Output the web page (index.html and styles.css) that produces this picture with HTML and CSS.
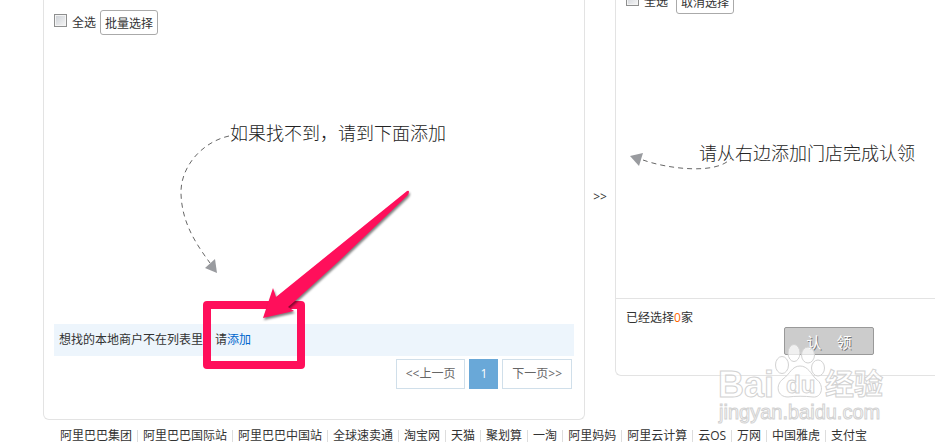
FILE: index.html
```html
<!DOCTYPE html>
<html lang="zh-CN">
<head>
    <meta charset="UTF-8">
    <meta name="viewport" content="width=device-width, initial-scale=1.0">
    <title>门店认领</title>
    <link rel="stylesheet" href="styles.css">
</head>
<body>
    <main class="claim">
        <section class="panel panel-source">
            <div class="toolbar">
                <input type="checkbox" id="selectAll">
                <label for="selectAll">全选</label>
                <button class="btn" type="button">批量选择</button>
            </div>
            <div class="shop-list">
                <p class="hint">如果找不到，请到下面添加</p>
                <svg class="hint-arrow" width="60" height="145" viewBox="0 0 60 145">
                    <path d="M50 6C23 12 1 37 2 64C3 94 18 115 31 133" fill="none" stroke="#666" stroke-dasharray="5 4"/>
                    <path d="M26 138L36 129L38 143Z" fill="#999b9f"/>
                </svg>
            </div>
            <p class="notice">想找的本地商户不在列表里，请<a href="#">添加</a></p>
            <nav class="pager">
                <a class="page" href="#">&lt;&lt;上一页</a>
                <a class="page current" href="#">1</a>
                <a class="page" href="#">下一页&gt;&gt;</a>
            </nav>
            <!-- highlighted add link -->
            <div class="mark-box"></div>
            <svg class="mark-arrow" width="160" height="140" viewBox="0 0 160 140">
                <path d="M152 6Q154 5 154 7Q154 9 152 11L83 77L40 116L33 122L39 126L8 133L18 103L21 112Z" fill="#ff0f5b"/>
            </svg>
        </section>

        <div class="transfer">&gt;&gt;</div>

        <section class="panel panel-target">
            <div class="toolbar">
                <input type="checkbox" id="selectChosen">
                <label for="selectChosen">全选</label>
                <button class="btn" type="button">取消选择</button>
            </div>
            <div class="chosen-list">
                <p class="hint">请从右边添加门店完成认领</p>
                <svg class="hint-arrow" width="105" height="30" viewBox="0 0 105 30">
                    <path d="M13 10C38 19 88 25 101 8" fill="none" stroke="#666" stroke-dasharray="5 4"/>
                    <path d="M0 6L13 3L9 16Z" fill="#999b9f"/>
                </svg>
            </div>
            <div class="summary">
                <p>已经选择<span class="count">0</span>家</p>
                <button class="btn-claim" type="button">认&emsp;领</button>
            </div>
            <svg class="watermark" width="175" height="90" viewBox="0 0 175 90">
                <g fill="#fff" fill-opacity="0.7" stroke="#d2d2d2">
                    <text class="wm-name" x="1" y="57">Bai</text>
                    <text class="wm-cn" x="108" y="55">经验</text>
                    <ellipse cx="65" cy="25" rx="6.500" ry="8.500"/>
                    <ellipse cx="77" cy="13" rx="6" ry="8.500"/>
                    <ellipse cx="91" cy="15" rx="6.500" ry="8"/>
                    <ellipse cx="101" cy="28" rx="6.500" ry="8"/>
                    <path d="M83 26C91 26 94 34 99 39C108 45 105 58 96 57C88 56 78 56 71 57C60 57 58 45 66 39C73 34 75 26 83 26Z"/>
                    <text class="wm-du" x="69" y="53">du</text>
                    <text class="wm-site" x="2" y="79">jingyan.baidu.com</text>
                </g>
            </svg>
        </section>
    </main>

    <footer class="links">
        <a href="#">阿里巴巴集团</a>
        <a href="#">阿里巴巴国际站</a>
        <a href="#">阿里巴巴中国站</a>
        <a href="#">全球速卖通</a>
        <a href="#">淘宝网</a>
        <a href="#">天猫</a>
        <a href="#">聚划算</a>
        <a href="#">一淘</a>
        <a href="#">阿里妈妈</a>
        <a href="#">阿里云计算</a>
        <a href="#">云OS</a>
        <a href="#">万网</a>
        <a href="#">中国雅虎</a>
        <a href="#">支付宝</a>
    </footer>
</body>
</html>
```

FILE: styles.css
```css
* {
    margin: 0;
    padding: 0;
    box-sizing: border-box;
}

body {
    font-family: "Open Sans", "Noto Sans CJK SC", sans-serif;
    font-size: 12px;
    line-height: 18px;
    color: #333;
    background: #fff;
}

a {
    color: #333;
    text-decoration: none;
}

.claim {
    display: grid;
    grid-template-columns: 542fr 30px 320fr;
    align-items: start;
    margin-left: 43px;
}

/* Panels */
.panel {
    position: relative;
    border: 1px solid #e3e3e3;
    border-top: none;
}

.panel-source {
    padding: 10px 10px 30px;
    border-radius: 0 0 6px 6px;
}

.panel-target {
    border-right: none;
    border-radius: 0 0 0 6px;
}

.toolbar {
    display: flex;
    align-items: center;
    gap: 4px;
    height: 25px;
}

/* the chosen list is scrolled up a little */
.panel-target .toolbar {
    margin: -11px 10px 0;
}

.panel-target .btn {
    margin-left: 4px;
}

.toolbar input {
    appearance: none;
    width: 13px;
    height: 13px;
    margin-bottom: 4px;
    border: 1px solid #8e8f8f;
    background: linear-gradient(135deg, #cbcfd5, #f6f6f6);
    box-shadow: inset 0 0 0 1px #f4f4f4;
}

.toolbar label {
    margin-left: 1px;
}

.btn {
    height: 25px;
    padding: 0 4px;
    border: 1px solid #aaa;
    border-radius: 3px;
    background: #fff;
    font-family: inherit;
    font-size: 12px;
    color: #333;
}

/* Lists */
.shop-list {
    position: relative;
    height: 289px;
    padding: 85px 0 0 176px;
}

.chosen-list {
    position: relative;
    height: 285px;
    padding: 126px 0 0 83px;
    border-bottom: 1px solid #e3e3e3;
}

.hint {
    font-family: "Noto Sans CJK SC", sans-serif;
    font-size: 18px;
    font-weight: 300;
    line-height: 24px;
    color: #222;
    white-space: nowrap;
}

.hint-arrow {
    position: absolute;
}

.shop-list .hint-arrow {
    top: 95px;
    left: 125px;
}

.chosen-list .hint-arrow {
    top: 136px;
    left: 14px;
}

.notice {
    padding: 0 5px;
    line-height: 32px;
    background: #edf5fc;
}

.notice a {
    color: #0066cc;
}

.pager {
    display: flex;
    justify-content: flex-end;
    gap: 4px;
    padding: 3px 2px 0 0;
}

.page {
    padding: 0 9px;
    border: 1px solid #d0dfea;
    line-height: 28px;
    color: #666;
}

.page.current {
    padding: 0 10px;
    border-color: #69a8d8;
    background: #69a8d8;
    color: #fff;
}

.transfer {
    padding-top: 188px;
    text-align: center;
}

.summary {
    height: 76px;
    padding: 10px;
}

.count {
    color: #ff6600;
}

.btn-claim {
    display: block;
    width: 90px;
    height: 28px;
    margin-left: 158px;
    border: 1px solid #999;
    border-radius: 2px;
    background: #ccc;
    font-family: inherit;
    font-size: 15px;
    color: #fff;
    text-shadow: 1px 1px 0 #777;
}

/* Mark on the add link */
.mark-box {
    position: absolute;
    top: 301px;
    left: 159px;
    width: 102px;
    height: 68px;
    border: 8px solid #ff0f5b;
    border-radius: 4px;
}

.mark-arrow {
    position: absolute;
    top: 185px;
    left: 211px;
    filter: drop-shadow(1px 2px 1px rgba(0, 0, 0, 0.5));
}

/* Watermark */
.watermark {
    position: absolute;
    top: 340px;
    left: 101px;
    pointer-events: none;
}

.wm-name,
.wm-du,
.wm-site {
    font-family: "Liberation Sans", sans-serif;
    font-weight: bold;
}

.wm-name {
    font-size: 36px;
}

.wm-du {
    font-size: 24px;
}

.wm-cn {
    font-family: "Noto Sans CJK SC", sans-serif;
    font-size: 29px;
    font-weight: bold;
}

.wm-site {
    font-size: 20px;
    font-weight: normal;
}

/* Footer links */
.links {
    display: flex;
    padding: 10px 0 0 55px;
    white-space: nowrap;
}

.links a {
    padding: 0 5px;
    line-height: 12px;
}

.links a + a {
    border-left: 1px solid #ddd;
}
```
